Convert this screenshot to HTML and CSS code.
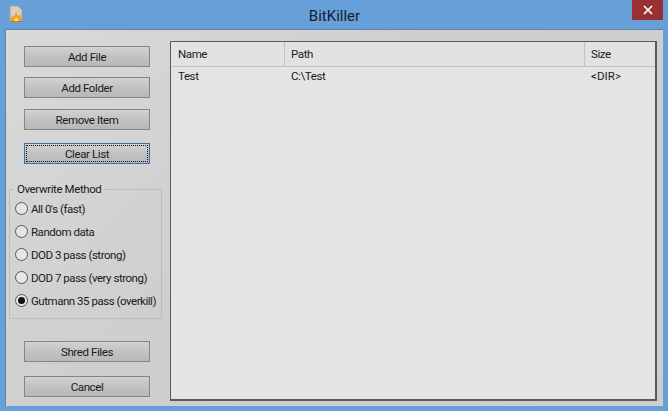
FILE: index.html
```html
<!DOCTYPE html>
<html lang="en">
<head>
<meta charset="utf-8">
<title>BitKiller</title>
<link rel="stylesheet" href="styles.css">
</head>
<body>
<div class="window">
  <header class="titlebar">
    <svg class="appicon" width="16" height="18" viewBox="0 0 16 18">
      <path d="M2 1h8l4 4v12H2z" fill="#d9cfc0" stroke="#a89f90" stroke-width="1"/>
      <path d="M2 16l2-5 2 1 2-5 2 4 2-1 2 6z" fill="#f0a020"/>
      <path d="M6 16l1-3 1 1 1-2 1 2 1 2z" fill="#fbe27a"/>
      <path d="M2 16h12v1H2z" fill="#c8701a"/>
    </svg>
    <h1 class="title">BitKiller</h1>
    <button class="close" type="button" aria-label="Close">
      <svg width="10" height="10" viewBox="0 0 10 10"><path d="M1 1l8 8M9 1l-8 8" stroke="#fff" stroke-width="1.7" fill="none"/></svg>
    </button>
  </header>
  <main class="client">
    <aside class="side">
      <div class="actions">
        <button class="btn" type="button">Add File</button>
        <button class="btn" type="button">Add Folder</button>
        <button class="btn third" type="button">Remove Item</button>
        <button class="btn focused" type="button"><span class="focusring">Clear List</span></button>
      </div>
      <fieldset class="group">
        <legend class="legend">Overwrite Method</legend>
        <label class="radio"><span class="dot"></span>All 0's (fast)</label>
        <label class="radio"><span class="dot"></span>Random data</label>
        <label class="radio"><span class="dot"></span>DOD 3 pass (strong)</label>
        <label class="radio"><span class="dot"></span>DOD 7 pass (very strong)</label>
        <label class="radio"><span class="dot on"></span>Gutmann 35 pass (overkill)</label>
      </fieldset>
      <div class="bottom">
        <button class="btn" type="button">Shred Files</button>
        <button class="btn" type="button">Cancel</button>
      </div>
    </aside>
    <section class="list">
      <div class="row head">
        <div class="c1">Name</div><div class="c2">Path</div><div class="c3">Size</div>
      </div>
      <div class="row item">
        <div class="c1">Test</div><div class="c2">C:\Test</div><div class="c3 dir">&lt;DIR&gt;</div>
      </div>
    </section>
  </main>
</div>
</body>
</html>
```
FILE: styles.css
```css
* { box-sizing: border-box; }
html, body { margin: 0; height: 100%; }
body {
  background: #679fd9;
  font-family: Roboto, "Liberation Sans", Arial, sans-serif;
  font-size: 11.5px;
  letter-spacing: -0.4px;
  color: #1a1a1a;
  overflow: hidden;
}
.window {
  width: 668px;
  height: 411px;
  display: flex;
  flex-direction: column;
  padding: 0 5px 5px 5px;
}
.titlebar {
  height: 29px;
  flex: none;
  display: flex;
  align-items: flex-start;
  position: relative;
}
.appicon { margin: 5px 0 0 3px; }
.title {
  flex: 1;
  margin: 7px 0 0;
  text-align: center;
  font-size: 15px;
  font-weight: 400;
  letter-spacing: 0;
  color: #16202e;
  padding-left: 13px;
}
.close {
  width: 31px;
  height: 20px;
  border: 0;
  padding: 0;
  background: #983034;
  display: flex;
  align-items: center;
  justify-content: center;
}
.client {
  flex: 1;
  display: flex;
  background: linear-gradient(135deg, #d9d9d9 0%, #cfcfcf 40%, #cdcdcd 100%);
  border: 1px solid #5f83a8;
  border-bottom: 0;
  border-right: 0;
  padding: 11px 7px 5px 3px;
  gap: 8px;
}
.side {
  width: 153px;
  flex: none;
  display: flex;
  flex-direction: column;
}
.actions {
  display: flex;
  flex-direction: column;
  gap: 10px;
  padding: 5px 12px 0 15px;
}
.btn {
  width: 126px;
  height: 21px;
  padding: 0;
  border: 1px solid #858585;
  background: linear-gradient(#d2d2d2, #c2c2c2 50%, #b8b8b8);
  font: inherit;
  letter-spacing: inherit;
  color: #1a1a1a;
  display: flex;
  align-items: center;
  justify-content: center;
}
.third { margin-top: 1px; }
.focused {
  margin-top: 3px;
  border-color: #3a6ea5;
  padding: 1px;
}
.focusring {
  width: 100%;
  height: 100%;
  border: 1px dotted #111;
  display: flex;
  align-items: center;
  justify-content: center;
}
.group {
  margin: 18px 0 0;
  padding: 0 0 9px 5px;
  height: 137px;
  min-width: 0;
  border: 1px solid #bdbdbd;
  display: flex;
  flex-direction: column;
}
.legend {
  padding: 0 3px;
  margin-left: -1px;
  line-height: 14px;
}
.radio {
  display: flex;
  align-items: center;
  gap: 3px;
  height: 23px;
  white-space: nowrap;
  letter-spacing: -0.47px;
  position: relative;
  top: 1px;
}
.dot {
  width: 13px;
  height: 13px;
  flex: none;
  border-radius: 50%;
  border: 1px solid #555;
  background: #e6e6e6;
  display: flex;
  align-items: center;
  justify-content: center;
}
.dot.on::after {
  content: "";
  width: 7px;
  height: 7px;
  border-radius: 50%;
  background: #111;
}
.bottom {
  display: flex;
  flex-direction: column;
  gap: 14px;
  margin-top: 22px;
  padding-left: 15px;
}
.list {
  flex: 1;
  background: #e4e4e4;
  border: 1px solid #5a5a5a;
  border-right-width: 2px;
  border-bottom-width: 2px;
}
.row { display: flex; }
.head {
  height: 25px;
  align-items: center;
  border-bottom: 1px solid #bcc2c8;
  background: #e2e2e2;
}
.item { height: 18px; align-items: center; }
.c1 { width: 114px; padding-left: 7px; }
.c2 { width: 300px; padding-left: 6px; }
.c3 { width: 70px; padding-left: 6px; }
.dir { letter-spacing: 0.1px; }
.head .c1, .head .c2, .head .c3 {
  height: 100%;
  display: flex;
  align-items: center;
}
.head .c1, .head .c2 { border-right: 1px solid #c2c2c2; }
```
